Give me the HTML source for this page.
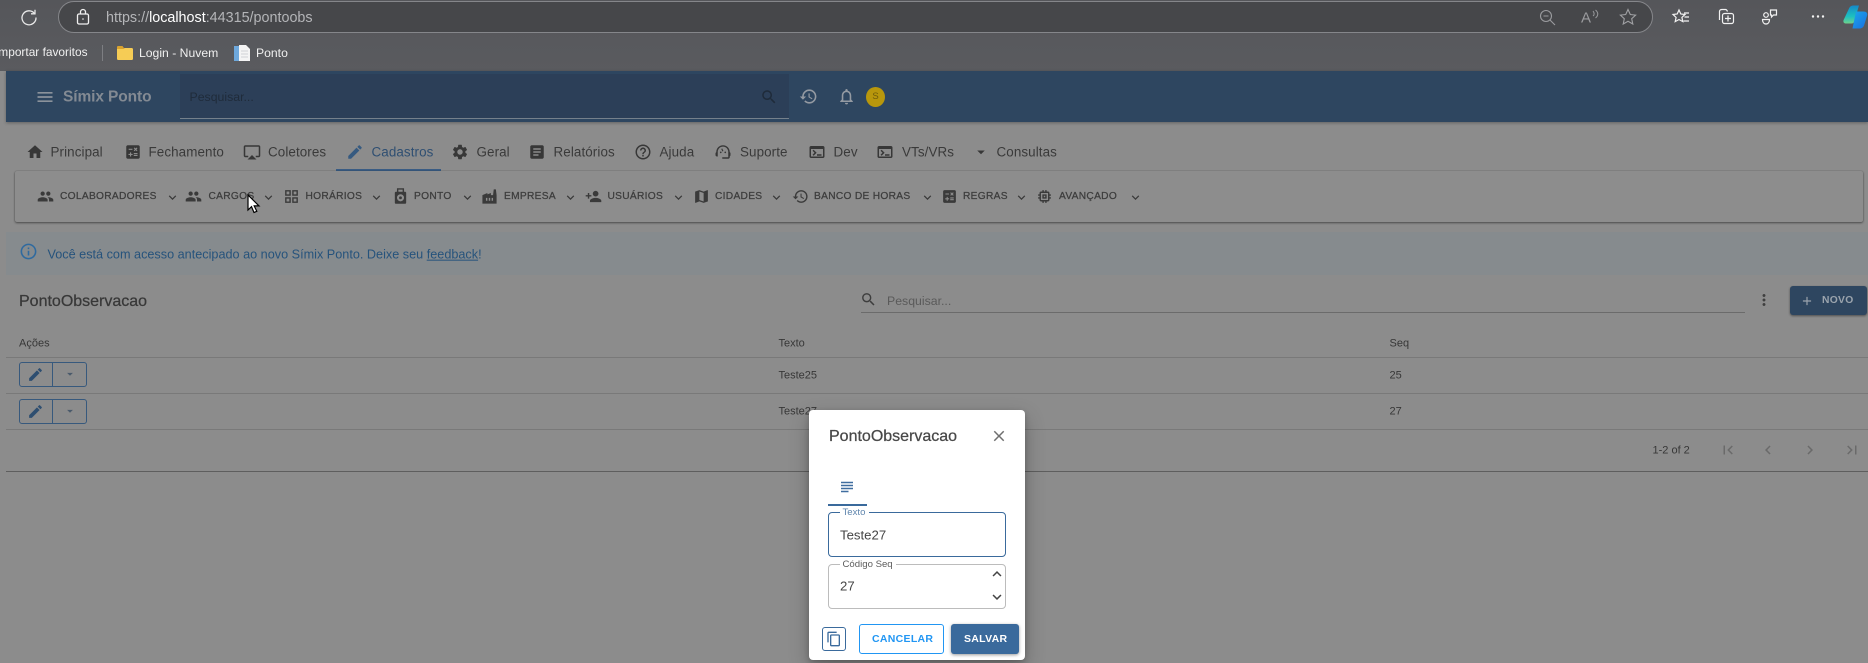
<!DOCTYPE html>
<html lang="pt"><head><meta charset="utf-8"><title>PontoObservacao</title>
<style>
html,body{margin:0;padding:0;width:1868px;height:663px;overflow:hidden;background:#8c8c8c}
body{position:relative;font-family:"Liberation Sans",sans-serif;color:#3b3b3b}
.b{position:absolute}
.t{position:absolute;white-space:nowrap;transform:translateY(-50%);line-height:1}
svg{position:absolute;overflow:visible}
.tab{font-size:13.4px;color:#3a3a3a;letter-spacing:.1px}
.sub{font-size:10.2px;color:#3d3d3d;letter-spacing:.3px;-webkit-text-stroke:.25px #3d3d3d}
.cell{font-size:11px;color:#373737}
.ti{fill:#373737}
.si{fill:#3a3a3a}
.ch{fill:#3a3a3a}
</style></head><body>
<svg width="0" height="0" style="position:absolute"><defs>
<symbol id="home" viewBox="0 0 24 24"><path d="M10 20v-6h4v6h5v-8h3L12 3 2 12h3v8z"/></symbol>
<symbol id="calc" viewBox="0 0 24 24"><path d="M19 3H5c-1.1 0-2 .9-2 2v14c0 1.1.9 2 2 2h14c1.1 0 2-.9 2-2V5c0-1.1-.9-2-2-2zm-5.97 4.06L14.09 6l1.41 1.41L16.91 6l1.06 1.06-1.41 1.41 1.41 1.41-1.06 1.06-1.41-1.4-1.41 1.41-1.06-1.06 1.41-1.41-1.41-1.42zm-6.78.66h5v1.5h-5v-1.5zM11.5 16h-2v2H8v-2H6v-1.5h2v-2h1.5v2h2V16zm6.5 1.25h-5v-1.5h5v1.5zm0-2.5h-5v-1.5h5v1.5z"/></symbol>
<symbol id="air" viewBox="0 0 24 24"><path d="M6 22h12l-6-6zM21 3H3c-1.1 0-2 .9-2 2v12c0 1.1.9 2 2 2h4v-2H3V5h18v12h-4v2h4c1.1 0 2-.9 2-2V5c0-1.1-.9-2-2-2z"/></symbol>
<symbol id="edit" viewBox="0 0 24 24"><path d="M3 17.25V21h3.75L17.81 9.94l-3.75-3.75L3 17.25zM20.71 7.04c.39-.39.39-1.02 0-1.41l-2.34-2.34c-.39-.39-1.02-.39-1.41 0l-1.83 1.83 3.75 3.75 1.83-1.83z"/></symbol>
<symbol id="gear" viewBox="0 0 24 24"><path d="M19.14 12.94c.04-.3.06-.61.06-.94 0-.32-.02-.64-.07-.94l2.03-1.58c.18-.14.23-.41.12-.61l-1.92-3.32c-.12-.22-.37-.29-.59-.22l-2.39.96c-.5-.38-1.03-.7-1.62-.94l-.36-2.54c-.04-.24-.24-.41-.48-.41h-3.84c-.24 0-.43.17-.47.41l-.36 2.54c-.59.24-1.13.57-1.62.94l-2.39-.96c-.22-.08-.47 0-.59.22L2.74 8.87c-.12.21-.08.47.12.61l2.03 1.58c-.05.3-.09.63-.09.94s.02.64.07.94l-2.03 1.58c-.18.14-.23.41-.12.61l1.92 3.32c.12.22.37.29.59.22l2.39-.96c.5.38 1.03.7 1.62.94l.36 2.54c.05.24.24.41.48.41h3.84c.24 0 .44-.17.47-.41l.36-2.54c.59-.24 1.13-.56 1.62-.94l2.39.96c.22.08.47 0 .59-.22l1.92-3.32c.12-.22.07-.47-.12-.61l-2.01-1.58zM12 15.6c-1.98 0-3.6-1.62-3.6-3.6s1.62-3.6 3.6-3.6 3.6 1.62 3.6 3.6-1.62 3.6-3.6 3.6z"/></symbol>
<symbol id="art" viewBox="0 0 24 24"><path d="M19 3H5c-1.1 0-2 .9-2 2v14c0 1.1.9 2 2 2h14c1.1 0 2-.9 2-2V5c0-1.1-.9-2-2-2zm-5 14H7v-2h7v2zm3-4H7v-2h10v2zm0-4H7V7h10v2z"/></symbol>
<symbol id="help" viewBox="0 0 24 24"><path d="M11 18h2v-2h-2v2zm1-16C6.48 2 2 6.48 2 12s4.48 10 10 10 10-4.48 10-10S17.52 2 12 2zm0 18c-4.41 0-8-3.59-8-8s3.59-8 8-8 8 3.59 8 8-3.59 8-8 8zm0-14c-2.21 0-4 1.79-4 4h2c0-1.1.9-2 2-2s2 .9 2 2c0 2-3 1.75-3 5h2c0-2.25 3-2.5 3-5 0-2.21-1.79-4-4-4z"/></symbol>
<symbol id="sup" viewBox="0 0 24 24"><path d="M21 12.22C21 6.73 16.74 3 12 3c-4.69 0-9 3.65-9 9.28-.6.34-1 .98-1 1.72v2c0 1.1.9 2 2 2h1v-6.1c0-3.87 3.13-7 7-7s7 3.13 7 7V19h-8v2h8c1.1 0 2-.9 2-2v-1.22c.59-.31 1-.92 1-1.61v-2.3c0-.7-.41-1.31-1-1.65z"/><circle cx="9" cy="12.5" r="1.1"/><circle cx="15" cy="12.5" r="1.1"/><path d="M10.900 7.200l1.600 3.300-1.300.8-1.500-3.300z"/></symbol>
<symbol id="term" viewBox="0 0 24 24"><path d="M20 4H4c-1.1 0-2 .9-2 2v12c0 1.1.9 2 2 2h16c1.1 0 2-.9 2-2V6c0-1.1-.9-2-2-2zm0 14H4V8h16v10zm-2-1h-6v-2h6v2zM7.5 17l-1.41-1.41L8.67 13l-2.59-2.59L7.5 9l4 4-4 4z"/></symbol>
<symbol id="drop" viewBox="0 0 24 24"><path d="M7 10l5 5 5-5z"/></symbol>
<symbol id="ppl" viewBox="0 0 24 24"><path d="M16 11c1.66 0 2.99-1.34 2.99-3S17.66 5 16 5c-1.66 0-3 1.34-3 3s1.34 3 3 3zm-8 0c1.66 0 2.99-1.34 2.99-3S9.66 5 8 5C6.34 5 5 6.34 5 8s1.34 3 3 3zm0 2c-2.33 0-7 1.17-7 3.5V19h14v-2.5c0-2.33-4.67-3.5-7-3.5zm8 0c-.29 0-.62.02-.97.05 1.16.84 1.97 1.97 1.97 3.45V19h6v-2.5c0-2.33-4.67-3.5-7-3.5z"/></symbol>
<symbol id="down" viewBox="0 0 24 24"><path d="M7.41 8.59L12 13.17l4.59-4.58L18 10l-6 6-6-6 1.41-1.41z"/></symbol>
<symbol id="up" viewBox="0 0 24 24"><path d="M7.41 15.41L12 10.83l4.59 4.58L18 14l-6-6-6 6z"/></symbol>
<symbol id="grid" viewBox="0 0 24 24"><path fill-rule="evenodd" d="M3 3h8v8H3zM5 5v4h4V5zM13 3h8v8h-8zM15 5v4h4V5zM3 13h8v8H3zM5 15v4h4v-4zM13 13h8v8h-8zM15 15v4h4v-4z"/></symbol>
<symbol id="pto" viewBox="0 0 24 24"><path fill-rule="evenodd" d="M7 1h10v5h1.500c.8 0 1.500.7 1.500 1.500V21.500c0 .8-.7 1.500-1.500 1.500h-13C4.700 23 4 22.300 4 21.500V7.500C4 6.700 4.700 6 5.500 6H7zM9 3v3h6V3zM12 9.500a5 5 0 1 0 0 10 5 5 0 0 0 0-10zM12 12.500a2 2 0 1 1 0 4 2 2 0 0 1 0-4z"/></symbol>
<symbol id="fac" viewBox="0 0 24 24"><path d="M22 22H2V10l7-3v2l5-2v3h3l1-8h3l1 8v12zM7 18h2v-4H7v4zm4 0h2v-4h-2v4zm4 0h2v-4h-2v4z" fill-rule="evenodd"/></symbol>
<symbol id="padd" viewBox="0 0 24 24"><path d="M15 12c2.210 0 4-1.790 4-4s-1.790-4-4-4-4 1.790-4 4 1.790 4 4 4zm-9-2V7H4v3H1v2h3v3h2v-3h3v-2H6zm9 4c-2.670 0-8 1.340-8 4v2h16v-2c0-2.660-5.330-4-8-4z"/></symbol>
<symbol id="map" viewBox="0 0 24 24"><path d="M20.5 3l-.16.03L15 5.100 9 3 3.360 4.900c-.21.07-.36.25-.36.48V20.500c0 .28.22.5.5.5l.16-.03L9 18.900l6 2.100 5.640-1.900c.21-.07.36-.25.36-.48V3.500c0-.28-.22-.5-.5-.5zM15 19l-6-2.110V5l6 2.110V19z"/></symbol>
<symbol id="hist" viewBox="0 0 24 24"><path d="M13 3c-4.970 0-9 4.030-9 9H1l3.890 3.890.07.14L9 12H6c0-3.870 3.130-7 7-7s7 3.130 7 7-3.130 7-7 7c-1.930 0-3.680-.79-4.940-2.060l-1.420 1.420C8.270 19.990 10.510 21 13 21c4.970 0 9-4.030 9-9s-4.030-9-9-9zm-1 5v5l4.280 2.540.72-1.210-3.500-2.080V8H12z"/></symbol>
<symbol id="mem" viewBox="0 0 24 24"><path d="M15 9H9v6h6V9zm-2 4h-2v-2h2v2zm8-2V9h-2V7c0-1.100-.9-2-2-2h-2V3h-2v2h-2V3H9v2H7c-1.100 0-2 .9-2 2v2H3v2h2v2H3v2h2v2c0 1.100.9 2 2 2h2v2h2v-2h2v2h2v-2h2c1.100 0 2-.9 2-2v-2h2v-2h-2v-2h2zm-4 6H7V7h10v10z"/></symbol>
<symbol id="menu" viewBox="0 0 24 24"><path d="M3 18h18v-2H3v2zm0-5h18v-2H3v2zm0-7v2h18V6H3z"/></symbol>
<symbol id="srch" viewBox="0 0 24 24"><path d="M15.500 14h-.79l-.28-.27C15.410 12.590 16 11.110 16 9.500 16 5.910 13.090 3 9.500 3S3 5.910 3 9.500 5.910 16 9.500 16c1.610 0 3.090-.59 4.230-1.570l.27.28v.79l5 4.990L20.490 19l-4.990-5zm-6 0C7.010 14 5 11.990 5 9.500S7.010 5 9.500 5 14 7.010 14 9.500 11.990 14 9.500 14z"/></symbol>
<symbol id="bell" viewBox="0 0 24 24"><path d="M12 22c1.100 0 2-.9 2-2h-4c0 1.100.9 2 2 2zm6-6v-5c0-3.070-1.630-5.640-4.500-6.320V4c0-.83-.67-1.500-1.500-1.500s-1.500.67-1.500 1.500v.68C7.640 5.360 6 7.920 6 11v5l-2 2v1h16v-1l-2-2zm-2 1H8v-6c0-2.480 1.510-4.500 4-4.500s4 2.020 4 4.500v6z"/></symbol>
<symbol id="first" viewBox="0 0 24 24"><path d="M18.410 16.590L13.820 12l4.590-4.590L17 6l-6 6 6 6zM6 6h2v12H6z"/></symbol>
<symbol id="last" viewBox="0 0 24 24"><path d="M5.590 7.410L10.180 12l-4.590 4.590L7 18l6-6-6-6zM16 6h2v12h-2z"/></symbol>
<symbol id="left" viewBox="0 0 24 24"><path d="M15.410 7.410L14 6l-6 6 6 6 1.410-1.410L10.830 12z"/></symbol>
<symbol id="right" viewBox="0 0 24 24"><path d="M10 6L8.590 7.410 13.170 12l-4.580 4.590L10 18l6-6z"/></symbol>
</defs></svg>

<!-- browser chrome -->
<div class="b" style="left:0;top:0;width:1868px;height:71px;background:linear-gradient(#55565a,#5a5b5f)"></div>
<div class="b" style="left:58px;top:1px;width:1593px;height:30px;border:1px solid #85868a;border-radius:16px;background:#46474a"></div>
<svg style="left:19px;top:7px" width="20" height="20" viewBox="0 0 20 20" fill="none" stroke="#e8e8e8" stroke-width="1.300"><path d="M15.600 6.600A7 7 0 1 0 17 10.500"/><path d="M16 2.800v4h-4"/></svg>
<svg style="left:76px;top:8px" width="14" height="18" viewBox="0 0 14 18" fill="none" stroke="#f0f0f0" stroke-width="1.300"><rect x="1.500" y="6" width="11" height="10" rx="1.500"/><path d="M4.500 6V4a2.500 2.500 0 0 1 5 0v2"/><circle cx="7" cy="11" r=".8" fill="#f0f0f0" stroke="none"/></svg>
<span class="t" style="left:106px;top:18px;font-size:14.350px;color:#b4b5b8">https://<span style="color:#fff">localhost</span>:44315/pontoobs</span>
<svg style="left:1539px;top:9px" width="17" height="17" viewBox="0 0 17 17" fill="none" stroke="#9a9b9e" stroke-width="1.100"><circle cx="7" cy="7" r="5.500"/><path d="M11 11l5 5M4.500 7h5"/></svg>
<span class="t" style="left:1581px;top:18px;font-size:15px;color:#9a9b9e">A</span>
<svg style="left:1592px;top:9px" width="7" height="11" viewBox="0 0 7 11" fill="none" stroke="#9a9b9e" stroke-width="1"><path d="M1 7c1.500-1 1.500-3 0-5M3.500 9c3-2.500 3-5.500 0-8"/></svg>
<svg style="left:1619px;top:8px" width="18" height="18" viewBox="0 0 18 18" fill="none" stroke="#a0a1a4" stroke-width="1.100"><path d="M9 1.500l2.300 5 5.300.6-3.900 3.600 1.100 5.300L9 13.300l-4.800 2.700 1.100-5.300L1.400 7.100l5.300-.6z"/></svg>
<svg style="left:1672px;top:8px" width="18" height="18" viewBox="0 0 18 18" fill="none" stroke="#f2f2f2" stroke-width="1.200"><path d="M7 2l1.800 4 4.200.5-3.100 2.900.9 4.200L7 11.500l-3.800 2.100.9-4.200L1 6.500 5.200 6zM12 5h5M12.500 9H17M11.500 13H17"/></svg>
<svg style="left:1717px;top:8px" width="18" height="18" viewBox="0 0 18 18" fill="none" stroke="#f2f2f2" stroke-width="1.200"><path d="M2.500 12V3.500C2.500 2 3.500 1.500 5 1.500h3.500c1 0 1.500.7 2 2"/><rect x="5.500" y="5.500" width="11" height="10" rx="2"/><path d="M11 7.500v6M8 10.500h6"/></svg>
<svg style="left:1761px;top:8px" width="18" height="18" viewBox="0 0 18 18" fill="none" stroke="#f2f2f2" stroke-width="1.200"><circle cx="5" cy="7" r="2.300"/><path d="M1.500 11.500h7c0 3-1.500 4.500-3.500 4.500s-3.500-1.500-3.500-4.500z"/><path d="M9.500 2h6v5h-3l-2 2V7h-1z"/></svg>
<svg style="left:1811px;top:14px" width="14" height="5" fill="#f2f2f2"><circle cx="2" cy="2.500" r="1.200"/><circle cx="7" cy="2.500" r="1.200"/><circle cx="12" cy="2.500" r="1.200"/></svg>
<svg style="left:1843px;top:5px" width="25" height="24" viewBox="0 0 25 24"><defs><linearGradient id="cp1" x1="0" y1="0" x2="0" y2="1"><stop offset="0" stop-color="#1589c9"/><stop offset=".6" stop-color="#1cc0c0"/><stop offset="1" stop-color="#6fd08a"/></linearGradient><linearGradient id="cp2" x1="0" y1="0" x2="1" y2="1"><stop offset="0" stop-color="#1aa6ea"/><stop offset="1" stop-color="#1a6fe0"/></linearGradient></defs><path d="M6 3.500C6.800 1.500 8.500.5 10.500.5h5.500l-5 16.500c-.4 1.200-1.300 1.500-2.500 1.500H3c-2 0-3-1.500-2.500-3.300z" fill="url(#cp1)"/><path d="M13 6.500h7.500c2.800 0 4.300 1.800 3.700 3.800l-3 9.700c-.7 2.200-2.400 3.500-4.700 3.500H9.500z" fill="url(#cp2)"/></svg>

<span class="t" style="left:-5px;top:53px;font-size:11.900px;color:#f0f0f0">Importar favoritos</span>
<div class="b" style="left:102px;top:45px;width:1px;height:16px;background:#7d7e82"></div>
<svg style="left:117px;top:46px" width="16" height="14" viewBox="0 0 16 14"><path d="M0 1.500C0 .7.600 0 1.300 0h4l1.500 2h7.900c.7 0 1.300.6 1.300 1.300v9.400c0 .7-.6 1.300-1.300 1.300H1.300C.6 14 0 13.400 0 12.700z" fill="#f6cc55"/><path d="M0 3h6.500L8 2H6.800L5.300 0h-4C.6 0 0 .7 0 1.500z" fill="#d9a22e"/></svg>
<span class="t" style="left:139px;top:53px;font-size:12.200px;color:#f0f0f0">Login - Nuvem</span>
<svg style="left:234px;top:45px" width="16" height="16" viewBox="0 0 16 16"><rect x="0" y="1" width="6" height="15" fill="#6ea8dc"/><path d="M5 0h7l4 4v12H5z" fill="#f4f4f4"/><path d="M7 6h7M7 9h7M7 12h7" stroke="#cfd2d6"/></svg>
<span class="t" style="left:256px;top:53px;font-size:12.200px;color:#f0f0f0">Ponto</span>

<!-- app header -->
<div class="b" style="left:6px;top:71px;width:1862px;height:51px;background:#2e4660;box-shadow:0 1px 3px rgba(0,0,0,.3)"></div>
<div class="b" style="left:180px;top:74px;width:609px;height:44px;background:#2c3f58;border-bottom:1px solid #75808b"></div>
<svg style="left:34.500px;top:87px;fill:#8b929b" width="20" height="20"><use href="#menu"/></svg>
<span class="t" style="left:63px;top:97px;font-size:15.500px;font-weight:bold;color:#838a93;letter-spacing:-.1px">Símix Ponto</span>
<span class="t" style="left:189.500px;top:97px;font-size:12.300px;color:#1f2b3a">Pesquisar...</span>
<svg style="left:760px;top:88px;fill:#1f2b3a" width="18" height="18"><use href="#srch"/></svg>
<svg style="left:799px;top:87px;fill:#949aa2" width="19" height="19"><use href="#hist"/></svg>
<svg style="left:837px;top:87px;fill:#949aa2" width="19" height="19"><use href="#bell"/></svg>
<div class="b" style="left:866px;top:87px;width:19px;height:20px;border-radius:50%;background:#b8970c;color:#6e5b0a;font-size:9.500px;line-height:20px;text-align:center">S</div>

<!-- tabs -->
<svg class="ti" style="left:26px;top:143px" width="18" height="18"><use href="#home"/></svg><span class="t tab" style="left:50.500px;top:152px">Principal</span>
<svg class="ti" style="left:124px;top:143px" width="18" height="18"><use href="#calc"/></svg><span class="t tab" style="left:148.500px;top:152px">Fechamento</span>
<svg class="ti" style="left:243px;top:143px" width="18" height="18"><use href="#air"/></svg><span class="t tab" style="left:268px;top:152px">Coletores</span>
<svg style="left:346px;top:143px;fill:#365a80" width="18" height="18"><use href="#edit"/></svg><span class="t tab" style="left:371.500px;top:152px;color:#2f4f72">Cadastros</span>
<svg class="ti" style="left:451px;top:143px" width="18" height="18"><use href="#gear"/></svg><span class="t tab" style="left:476.500px;top:152px">Geral</span>
<svg class="ti" style="left:528px;top:143px" width="18" height="18"><use href="#art"/></svg><span class="t tab" style="left:553.500px;top:152px">Relatórios</span>
<svg class="ti" style="left:634px;top:143px" width="18" height="18"><use href="#help"/></svg><span class="t tab" style="left:659.500px;top:152px">Ajuda</span>
<svg class="ti" style="left:714px;top:143px" width="18" height="18"><use href="#sup"/></svg><span class="t tab" style="left:740px;top:152px">Suporte</span>
<svg class="ti" style="left:808px;top:143px" width="18" height="18"><use href="#term"/></svg><span class="t tab" style="left:833.500px;top:152px">Dev</span>
<svg class="ti" style="left:876px;top:143px" width="18" height="18"><use href="#term"/></svg><span class="t tab" style="left:902px;top:152px">VTs/VRs</span>
<svg class="ti" style="left:972px;top:143px" width="18" height="18"><use href="#drop"/></svg><span class="t tab" style="left:996.500px;top:152px">Consultas</span>
<div class="b" style="left:336px;top:169px;width:105px;height:2px;background:#3a5d84"></div>

<!-- submenu panel -->
<div class="b" style="left:15px;top:171px;width:1848px;height:51px;background:#8d8d8d;border-radius:2px;box-shadow:0 1px 2px rgba(0,0,0,.45),0 0 1px rgba(0,0,0,.3)"></div>
<svg class="si" style="left:37px;top:188px" width="17" height="17"><use href="#ppl"/></svg><span class="t sub" style="left:60px;top:197px">COLABORADORES</span><svg class="ch" style="left:164.500px;top:190px" width="15" height="15"><use href="#down"/></svg>
<svg class="si" style="left:185px;top:188px" width="17" height="17"><use href="#ppl"/></svg><span class="t sub" style="left:208.500px;top:197px">CARGOS</span><svg class="ch" style="left:261px;top:190px" width="15" height="15"><use href="#down"/></svg>
<svg class="si" style="left:283px;top:188px" width="17" height="17"><use href="#grid"/></svg><span class="t sub" style="left:305.500px;top:197px">HORÁRIOS</span><svg class="ch" style="left:369px;top:190px" width="15" height="15"><use href="#down"/></svg>
<svg class="si" style="left:391.500px;top:187px" width="17" height="18"><use href="#pto"/></svg><span class="t sub" style="left:414px;top:197px">PONTO</span><svg class="ch" style="left:459.500px;top:190px" width="15" height="15"><use href="#down"/></svg>
<svg class="si" style="left:481px;top:188px" width="17" height="17"><use href="#fac"/></svg><span class="t sub" style="left:504px;top:197px">EMPRESA</span><svg class="ch" style="left:563px;top:190px" width="15" height="15"><use href="#down"/></svg>
<svg class="si" style="left:585px;top:188px" width="17" height="17"><use href="#padd"/></svg><span class="t sub" style="left:607.500px;top:197px">USUÁRIOS</span><svg class="ch" style="left:670.500px;top:190px" width="15" height="15"><use href="#down"/></svg>
<svg class="si" style="left:692.500px;top:188px" width="17" height="17"><use href="#map"/></svg><span class="t sub" style="left:715px;top:197px">CIDADES</span><svg class="ch" style="left:769px;top:190px" width="15" height="15"><use href="#down"/></svg>
<svg class="si" style="left:791.500px;top:188px" width="17" height="17"><use href="#hist"/></svg><span class="t sub" style="left:814px;top:197px">BANCO DE HORAS</span><svg class="ch" style="left:919.500px;top:190px" width="15" height="15"><use href="#down"/></svg>
<svg class="si" style="left:941px;top:188px" width="17" height="17"><use href="#calc"/></svg><span class="t sub" style="left:963px;top:197px">REGRAS</span><svg class="ch" style="left:1014px;top:190px" width="15" height="15"><use href="#down"/></svg>
<svg class="si" style="left:1036px;top:188px" width="17" height="17"><use href="#mem"/></svg><span class="t sub" style="left:1059px;top:197px">AVANÇADO</span><svg class="ch" style="left:1127.500px;top:190px" width="15" height="15"><use href="#down"/></svg>

<!-- cursor -->
<svg style="left:247px;top:194px" width="15" height="20" viewBox="0 0 15 20"><path d="M1 1v15l3.500-3.300L7 18.500l2.800-1.200-2.600-5.400H12z" fill="#fff" stroke="#000" stroke-width="1.200"/></svg>

<!-- alert -->
<div class="b" style="left:6px;top:232px;width:1862px;height:43px;background:#868b8e"></div>
<svg style="left:19px;top:242px;fill:#2f6a9f" width="19" height="19"><path d="M11 7h2v2h-2zm0 4h2v6h-2zm1-9C6.480 2 2 6.480 2 12s4.480 10 10 10 10-4.480 10-10S17.520 2 12 2zm0 18c-4.410 0-8-3.590-8-8s3.590-8 8-8 8 3.590 8 8-3.590 8-8 8z" transform="scale(.7917)"/></svg>
<span class="t" style="left:47.500px;top:255px;font-size:12.660px;color:#26537c">Você está com acesso antecipado ao novo Símix Ponto. Deixe seu <span style="text-decoration:underline">feedback</span>!</span>

<!-- table header -->
<span class="t" style="left:19px;top:302px;font-size:16px;color:#383838;-webkit-text-stroke:.25px #383838">PontoObservacao</span>
<svg style="left:860px;top:291px;fill:#3d3d3d" width="17" height="17"><use href="#srch"/></svg>
<span class="t" style="left:887px;top:301px;font-size:12.300px;color:#5a5a5a">Pesquisar...</span>
<div class="b" style="left:861px;top:312px;width:884px;height:1px;background:#6b6b6b"></div>
<svg style="left:1755px;top:291px;fill:#3f3f3f" width="18" height="18"><path d="M12 8c1.100 0 2-.9 2-2s-.9-2-2-2-2 .9-2 2 .9 2 2 2zm0 2c-1.100 0-2 .9-2 2s.9 2 2 2 2-.9 2-2-.9-2-2-2zm0 6c-1.100 0-2 .9-2 2s.9 2 2 2 2-.9 2-2-.9-2-2-2z" transform="scale(.75)"/></svg>
<div class="b" style="left:1790px;top:286px;width:77px;height:29px;background:#2e4660;border-radius:3px;box-shadow:0 1px 2px rgba(0,0,0,.45)"></div>
<svg style="left:1800px;top:294px;fill:#9ba4ad" width="14" height="14" viewBox="0 0 24 24"><path d="M19 13h-6v6h-2v-6H5v-2h6V5h2v6h6v2z"/></svg>
<span class="t" style="left:1822px;top:300.500px;font-size:10.300px;font-weight:bold;letter-spacing:.3px;color:#9ba4ad">NOVO</span>

<!-- table -->
<span class="t cell" style="left:19px;top:343.500px">Ações</span>
<span class="t cell" style="left:778.500px;top:343.500px">Texto</span>
<span class="t cell" style="left:1389.500px;top:343.500px">Seq</span>
<div class="b" style="left:6px;top:357px;width:1862px;height:1px;background:#797979"></div>
<div class="b" style="left:6px;top:393px;width:1862px;height:1px;background:#797979"></div>
<div class="b" style="left:6px;top:429px;width:1862px;height:1px;background:#797979"></div>
<div class="b" style="left:6px;top:471px;width:1862px;height:1px;background:#5e5e5e"></div>

<div class="b" style="left:19px;top:362px;width:66px;height:23px;border:1px solid #37597d;border-radius:3px"></div>
<div class="b" style="left:52px;top:362px;width:1px;height:25px;background:#37597d"></div>
<svg style="left:27px;top:366px;fill:#2e4e70" width="17" height="17"><use href="#edit"/></svg>
<svg style="left:63px;top:367px;fill:#4a5a6b" width="14" height="14"><use href="#drop"/></svg>
<div class="b" style="left:19px;top:399px;width:66px;height:23px;border:1px solid #37597d;border-radius:3px"></div>
<div class="b" style="left:52px;top:399px;width:1px;height:25px;background:#37597d"></div>
<svg style="left:27px;top:403px;fill:#2e4e70" width="17" height="17"><use href="#edit"/></svg>
<svg style="left:63px;top:404px;fill:#4a5a6b" width="14" height="14"><use href="#drop"/></svg>

<span class="t cell" style="left:778.500px;top:376px">Teste25</span>
<span class="t cell" style="left:1389.500px;top:376px">25</span>
<span class="t cell" style="left:778.500px;top:412px">Teste27</span>
<span class="t cell" style="left:1389.500px;top:412px">27</span>

<span class="t cell" style="left:1652.500px;top:450.500px">1-2 of 2</span>
<svg style="left:1719px;top:441px;fill:#6a6a6a" width="18" height="18"><use href="#first"/></svg>
<svg style="left:1759px;top:441px;fill:#6a6a6a" width="18" height="18"><use href="#left"/></svg>
<svg style="left:1801px;top:441px;fill:#6a6a6a" width="18" height="18"><use href="#right"/></svg>
<svg style="left:1843px;top:441px;fill:#6a6a6a" width="18" height="18"><use href="#last"/></svg>

<!-- dialog -->
<div class="b" style="left:809px;top:410px;width:216px;height:250px;background:#fff;border-radius:4px;box-shadow:0 8px 20px rgba(0,0,0,.25),0 2px 6px rgba(0,0,0,.2)"></div>
<span class="t" style="left:829px;top:437px;font-size:16px;color:#484848;-webkit-text-stroke:.25px #484848">PontoObservacao</span>
<svg style="left:990px;top:427px;fill:#6f6f6f" width="18" height="18"><path d="M19 6.410L17.590 5 12 10.590 6.410 5 5 6.410 10.590 12 5 17.590 6.410 19 12 13.410 17.590 19 19 17.590 13.410 12z" transform="scale(.75)"/></svg>
<svg style="left:838px;top:478px;fill:#3f6d9f" width="18" height="18" viewBox="0 0 24 24"><path d="M14 17H4v2h10v-2zm6-8H4v2h16V9zM4 15h16v-2H4v2zM4 5v2h16V5H4z"/></svg>
<div class="b" style="left:828px;top:504px;width:39px;height:2px;background:#3a6a9c"></div>

<div class="b" style="left:828px;top:512px;width:175.500px;height:43px;border:1.500px solid #3a6a9c;border-radius:4px"></div>
<div class="b" style="left:840px;top:510px;width:29px;height:4px;background:#fff"></div>
<span class="t" style="left:842.500px;top:513px;font-size:9.600px;color:#5f85ad">Texto</span>
<span class="t" style="left:840px;top:535px;font-size:13.200px;color:#454545">Teste27</span>

<div class="b" style="left:828px;top:564px;width:176px;height:43px;border:1px solid #bcbcbc;border-radius:4px"></div>
<div class="b" style="left:840px;top:562px;width:56px;height:4px;background:#fff"></div>
<span class="t" style="left:842.500px;top:565px;font-size:9.600px;color:#5c5c5c">Código Seq</span>
<span class="t" style="left:840px;top:586px;font-size:13.200px;color:#454545">27</span>
<svg style="left:988px;top:565px;fill:#444" width="18" height="18"><use href="#up"/></svg>
<svg style="left:988px;top:588px;fill:#444" width="18" height="18"><use href="#down"/></svg>

<div class="b" style="left:822px;top:627px;width:22px;height:22px;border:1px solid #3a6a9c;border-radius:3px"></div>
<svg style="left:826px;top:631px;fill:#3a6a9c" width="16" height="16" viewBox="0 0 24 24"><path d="M16 1H4c-1.100 0-2 .9-2 2v14h2V3h12V1zm3 4H8c-1.100 0-2 .9-2 2v14c0 1.100.9 2 2 2h11c1.100 0 2-.9 2-2V7c0-1.100-.9-2-2-2zm0 16H8V7h11v14z"/></svg>
<div class="b" style="left:859px;top:624px;width:83px;height:28px;border:1px solid #2196f3;border-radius:3px"></div>
<span class="t" style="left:872px;top:638.500px;font-size:10.500px;font-weight:bold;letter-spacing:.3px;color:#2196f3">CANCELAR</span>
<div class="b" style="left:951px;top:624px;width:68px;height:30px;background:#3a6a9c;border-radius:3px;box-shadow:0 1px 3px rgba(0,0,0,.4)"></div>
<span class="t" style="left:964px;top:638.500px;font-size:10.500px;font-weight:bold;letter-spacing:.3px;color:#fff">SALVAR</span>
</body></html>
